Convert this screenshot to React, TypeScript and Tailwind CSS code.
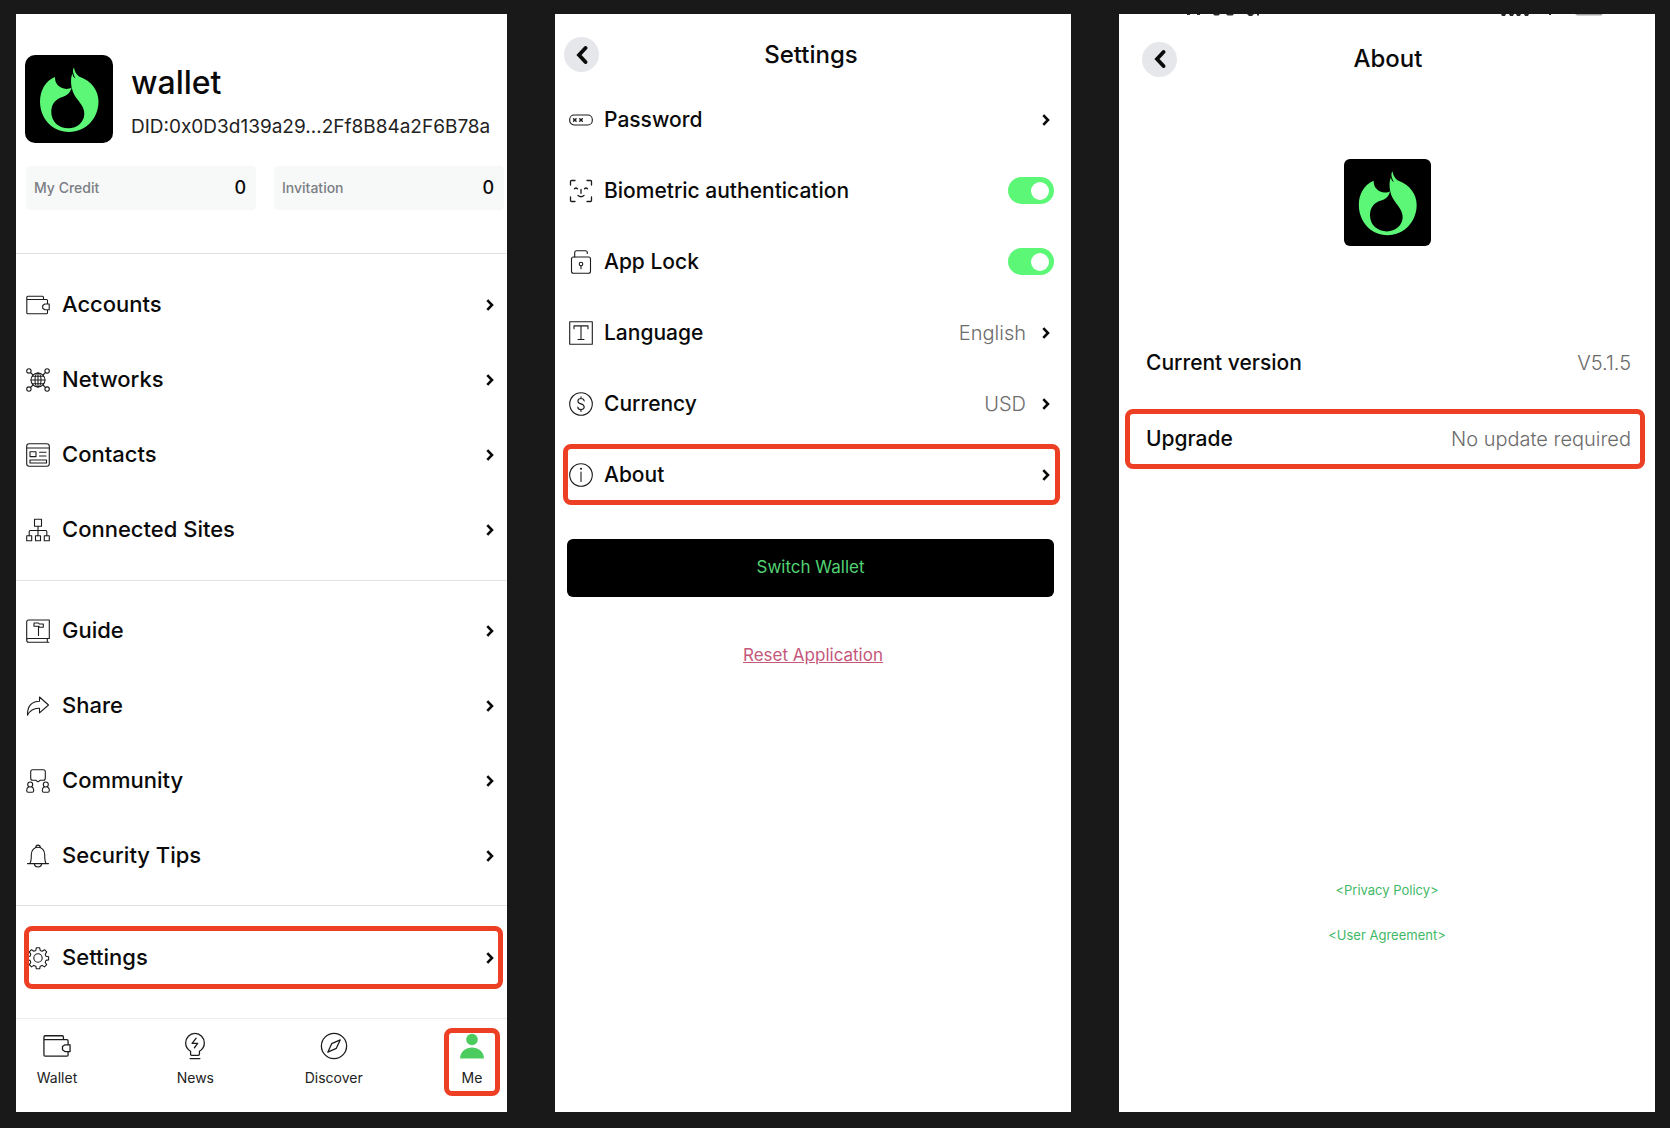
import React from "react";

const GREEN = "#5cf777";

function Flame({ className }: { className: string }) {
  return (
    <svg viewBox="0 0 88 88" className={className} role="img" aria-label="Wallet logo">
      <rect width="88" height="88" fill="#000" />
      <path
        fill={GREEN}
        fillRule="evenodd"
        d="M30 22C20 26 15 36 15 46.500C15 63 27 77 44 77C61 77 73.500 63 73.500 46.500C73.500 36 67 26 54 21.500C51 19 49.500 16 49 12.500C47 15.500 48.200 19 50.500 23.500C48.500 22.500 47.500 20.500 47.600 18.500C45.500 22 45.800 29 47 33.500C48.500 41 53.500 45 56.500 50C58.500 53 59.300 56 59.300 59C59.300 67 52 73.300 43.500 73.300C34 73.300 26.300 67 26.300 57C26.300 48.500 31 44 37.500 42C42.500 40.300 45.500 37.500 46.600 32.500C43.500 34.500 39.500 34.300 36 32.500C31.500 30 30 26.500 30 22Z"
      />
    </svg>
  );
}

type IconProps = { className?: string; children: React.ReactNode };

function Icon({ className = "size-6", children }: IconProps) {
  return (
    <svg
      viewBox="0 0 24 24"
      className={`${className} shrink-0`}
      fill="none"
      stroke="#1c1c1c"
      strokeWidth="1.1"
      strokeLinecap="round"
      strokeLinejoin="round"
      aria-hidden="true"
    >
      {children}
    </svg>
  );
}

const WalletIcon = ({ className }: { className?: string }) => (
  <Icon className={className}>
    <path d="M17.500 6.500V4.200Q17.500 3.200 16.500 3.200H1.800Q.8 3.200.8 4.200V19.700Q.8 20.700 1.800 20.700H20.500Q21.500 20.700 21.500 19.700V16.800M.8 5.500Q.8 6.500 1.800 6.500H20.500Q21.500 6.500 21.500 7.500V11M23.200 11H18.800L16.700 12.500V15.200L18.800 16.800H23.200Z" />
  </Icon>
);

const NetworkIcon = () => (
  <Icon>
    <circle cx="12" cy="12" r="7" />
    <ellipse cx="12" cy="12" rx="3" ry="7" />
    <path d="M5 12h14M12 5v14M6.500 8.200h11M6.500 15.800h11M4.600 4.600 7 7M19.400 4.600 17 7M4.600 19.400 7 17M19.400 19.400 17 17" />
    <circle cx="2.900" cy="2.900" r="2.200" />
    <circle cx="21.100" cy="2.900" r="2.200" />
    <circle cx="2.900" cy="21.100" r="2.200" />
    <circle cx="21.100" cy="21.100" r="2.200" />
  </Icon>
);

const ContactsIcon = () => (
  <Icon>
    <rect x=".7" y=".7" width="22.600" height="22.600" rx="2.500" />
    <path d="M.7 5h22.600M13.500 9.200h6.500M13.500 13h6.500" />
    <rect x="4" y="8.800" width="6" height="4.800" />
    <rect x="4" y="17" width="16.500" height="3" />
  </Icon>
);

const SitesIcon = () => (
  <Icon>
    <rect x="8.500" y="1.200" width="7" height="7" />
    <rect x=".7" y="17.700" width="5" height="5" />
    <rect x="9.500" y="17.700" width="5" height="5" />
    <rect x="18.300" y="17.700" width="5" height="5" />
    <path d="M12 8.200v9.500M3.200 17.700v-4.200q0-1 1-1h15.600q1 0 1 1v4.200" />
  </Icon>
);

const GuideIcon = () => (
  <Icon>
    <path d="M23.300 19.500V1H2.700Q.7 1 .7 3V21.300Q.7 23.300 2.700 23.300H22.800M23.300 19.500H2.500Q.7 19.500.7 21.300M21.300 19.500v3.800" />
    <path d="M8 4h4.500l.8 1h4v3.200h-3.800l-.8-1H8ZM12.500 8v8.500" />
  </Icon>
);

const ShareIcon = () => (
  <Icon>
    <path d="M13.500 3 22.500 11 13.500 18.800V14.300C8 14 4.500 15.500 1.500 21.300C1.200 12 5.500 7.300 13.500 7.200Z" />
  </Icon>
);

const CommunityIcon = () => (
  <Icon>
    <path d="M6.700.8h10.600q2 0 2 2v6.400q0 2-2 2h-3l-2.300 1.700-2.300-1.700h-3q-2 0-2-2V2.800q0-2 2-2Z" />
    <circle cx="4.200" cy="15.500" r="2.500" />
    <circle cx="19.800" cy="15.500" r="2.500" />
    <path d="M2.800 17.700Q.7 18.700.7 21v.8q0 1.500 1.500 1.500h4q1.500 0 1.500-1.500V21q0-2.300-2.100-3.300M18.400 17.700q-2.100 1-2.100 3.300v.8q0 1.500 1.500 1.500h4q1.500 0 1.500-1.500V21q0-2.300-2.100-3.300" />
  </Icon>
);

const BellIcon = () => (
  <Icon>
    <path d="M9.800 3.300a2.200 2.200 0 0 1 4.400 0M1.500 19.600h21M3.800 19.600C5.500 17 5.300 14 5.300 10.500C5.300 6.500 8 3.300 12 3.300S18.700 6.500 18.700 10.500C18.700 14 18.500 17 20.200 19.600M8.300 20.200q.6 2.800 3.700 2.800t3.700-2.800" />
  </Icon>
);

const GearIcon = () => (
  <Icon>
    <circle cx="12" cy="12" r="4.200" />
    <path d="M10.300 1.800h3.400l.5 2.600 2 .8 2.300-1.500 2.200 2.200-1.500 2.300.8 2 2.600.5v3.200l-2.600.5-.8 2 1.500 2.300-2.200 2.200-2.300-1.500-2 .8-.5 2.600h-3.400l-.5-2.600-2-.8-2.300 1.500-2.200-2.200 1.500-2.300-.8-2-2.600-.5v-3.200l2.600-.5.8-2-1.500-2.300 2.200-2.200 2.300 1.500 2-.8Z" />
  </Icon>
);

const PasswordIcon = () => (
  <Icon>
    <rect x=".7" y="7" width="22.600" height="10" rx="4.500" />
    <path strokeWidth="1.400" d="m4.500 10.700 2.600 2.600m0-2.600-2.600 2.600M10.700 10.700l2.600 2.600m0-2.600-2.600 2.600" />
  </Icon>
);

const FaceIcon = () => (
  <Icon>
    <path strokeWidth="1.300" d="M1.500 6V2.500Q1.500 1.500 2.500 1.500H6M18 1.500h3.500q1 0 1 1V6M22.500 18v3.500q0 1-1 1H18M6 22.500H2.500q-1 0-1-1V18M5.500 9.800Q7 8.300 8.500 9.800M15.500 9.800Q17 8.300 18.500 9.800M12 10.500v3.800M9 16.500q3 2.600 6 0" />
  </Icon>
);

const LockIcon = () => (
  <Icon>
    <rect x="2.500" y="7" width="19" height="16.300" rx="2" />
    <circle cx="12" cy="14" r="1.800" />
    <path d="M12 15.800v3M5.700 7V2.700q0-2 2-2h8.600q2 0 2 2v.8" />
  </Icon>
);

const LanguageIcon = () => (
  <Icon>
    <rect x=".7" y=".7" width="22.600" height="22.600" />
    <path d="M5 7.800V4.900h14v2.900M12 4.900v13.600M9 18.500h6" />
  </Icon>
);

const CurrencyIcon = () => (
  <Icon>
    <circle cx="12" cy="12" r="11.300" />
    <path d="M15.200 9q-.3-2.500-3.200-2.500T8.900 8.900q0 2.200 3.100 3t3.200 3.200q0 2.500-3.200 2.500T8.800 15M12 4.800v1.700M12 17.600v1.800" />
  </Icon>
);

const InfoIcon = () => (
  <Icon>
    <circle cx="12" cy="12" r="11.300" />
    <path d="M12 9v9.500" />
    <circle cx="12" cy="5.800" r=".5" fill="#1c1c1c" />
  </Icon>
);

const BulbIcon = () => (
  <Icon className="size-7">
    <path d="M8.200 18.800V16.500C5.500 15 4 12.500 4 9.500C4 5 7.500 1.200 12 1.200S20 5 20 9.500C20 12.500 18.500 15 15.800 16.500V18.800Q15.800 20 14.800 20H9.200Q8.200 20 8.200 18.800ZM7.800 22.800h8.400M13 5.300 9.500 9.800H14.300L11.500 13.500" />
  </Icon>
);

const CompassIcon = () => (
  <Icon className="size-7">
    <circle cx="12" cy="12" r="10.800" />
    <path d="M17.300 6.800 14 14 6.700 17.300 10 10Z" />
  </Icon>
);

const PersonIcon = () => (
  <svg viewBox="0 0 28 28" className="size-7 shrink-0" fill="#4ccb5f" aria-hidden="true">
    <circle cx="14" cy="7.500" r="5.800" />
    <path d="M2 26.500C2.500 19 8 15.500 14 15.500S25.500 19 26 26.500Z" />
  </svg>
);

function Chevron() {
  return (
    <svg viewBox="0 0 8 12" className="h-3 w-2 shrink-0" fill="none" stroke="#0a0a0a" strokeWidth="2.600" aria-hidden="true">
      <path d="M1.300 1.200 6 6 1.300 10.800" />
    </svg>
  );
}

function Highlight({ className }: { className: string }) {
  return <span aria-hidden="true" className={`pointer-events-none absolute rounded-lg border-5 border-[#ed3f24] ${className}`} />;
}

function MenuRow({ icon, label, children }: { icon: React.ReactNode; label: string; children?: React.ReactNode }) {
  return (
    <li className="relative">
      <button type="button" className="flex h-[75px] w-full items-center pr-[13px] pl-2.5 text-left">
        {icon}
        <span className="ml-3 flex-1 text-[22px] font-medium">{label}</span>
        <Chevron />
      </button>
      {children}
    </li>
  );
}

function Stat({ label, value }: { label: string; value: string }) {
  return (
    <div className="flex h-11 flex-1 items-center justify-between rounded-sm bg-[#f7f8f8] pr-2.5 pl-2">
      <dt className="text-sm font-medium text-[#7b7e84]">{label}</dt>
      <dd className="text-lg font-medium">{value}</dd>
    </div>
  );
}

function Tab({ icon, label, children }: { icon: React.ReactNode; label: string; children?: React.ReactNode }) {
  return (
    <button type="button" className="relative flex w-14 flex-col items-center gap-2 text-sm text-[#222]">
      {icon}
      <span>{label}</span>
      {children}
    </button>
  );
}

function MeScreen() {
  return (
    <section className="flex min-w-0 flex-col bg-white">
      <header className="flex items-center gap-[18px] px-[9px] pt-[41px]">
        <Flame className="size-[88px] shrink-0 rounded-[10px]" />
        <div className="min-w-0 pt-[7px]">
          <h1 className="text-[32px] leading-10 font-medium">wallet</h1>
          <p className="mt-2 text-[19px] leading-8 whitespace-nowrap text-[#222]">DID:0x0D3d139a29…2Ff8B84a2F6B78a</p>
        </div>
      </header>
      <dl className="mt-[23px] mb-[43px] flex gap-[18px] pr-[3px] pl-2.5">
        <Stat label="My Credit" value="0" />
        <Stat label="Invitation" value="0" />
      </dl>
      <ul className="border-t border-[#e2e2e2] py-[13px]">
        <MenuRow icon={<WalletIcon />} label="Accounts" />
        <MenuRow icon={<NetworkIcon />} label="Networks" />
        <MenuRow icon={<ContactsIcon />} label="Contacts" />
        <MenuRow icon={<SitesIcon />} label="Connected Sites" />
      </ul>
      <ul className="border-t border-[#e2e2e2] py-3">
        <MenuRow icon={<GuideIcon />} label="Guide" />
        <MenuRow icon={<ShareIcon />} label="Share" />
        <MenuRow icon={<CommunityIcon />} label="Community" />
        <MenuRow icon={<BellIcon />} label="Security Tips" />
      </ul>
      <ul className="border-t border-[#e2e2e2] pt-3.5 pb-[23px]">
        <MenuRow icon={<GearIcon />} label="Settings">
          <Highlight className="inset-y-1.5 right-1 left-2" />
        </MenuRow>
      </ul>
      <nav className="flex flex-1 items-start justify-between border-t border-[#ececec] pt-[13px] pr-[7px] pl-[13px]">
        <Tab icon={<WalletIcon className="size-7" />} label="Wallet" />
        <Tab icon={<BulbIcon />} label="News" />
        <Tab icon={<CompassIcon />} label="Discover" />
        <Tab icon={<PersonIcon />} label="Me">
          <Highlight className="inset-x-0 -top-1 -bottom-2" />
        </Tab>
      </nav>
    </section>
  );
}

function TitleBar({ title, className }: { title: string; className: string }) {
  return (
    <header className={`grid grid-cols-[35px_1fr_35px] items-center ${className}`}>
      <button type="button" aria-label="Back" className="grid size-[35px] place-items-center rounded-full bg-[#e6e7ea]">
        <svg viewBox="0 0 12 18" className="h-[18px] w-3" fill="none" stroke="#0a0a0a" strokeWidth="3.800" strokeLinecap="round" aria-hidden="true">
          <path d="M9.500 2 3 9l6.500 7" />
        </svg>
      </button>
      <h2 className="text-center text-2xl font-medium">{title}</h2>
    </header>
  );
}

const settingRow = "flex h-[71px] w-full items-center pl-3.5 text-left";
const settingLabel = "ml-[11px] flex-1 text-[21px] font-medium";

function SettingLink({ icon, label, value, children }: { icon: React.ReactNode; label: string; value?: string; children?: React.ReactNode }) {
  return (
    <li className="relative">
      <button type="button" className={`${settingRow} pr-[21px]`}>
        {icon}
        <span className={settingLabel}>{label}</span>
        {value && <span className="mr-4 text-xl font-light text-[#6b6b6b]">{value}</span>}
        <Chevron />
      </button>
      {children}
    </li>
  );
}

function SettingSwitch({ icon, label }: { icon: React.ReactNode; label: string }) {
  return (
    <li>
      <label className={`${settingRow} relative pr-[17px]`}>
        {icon}
        <span className={settingLabel}>{label}</span>
        <input type="checkbox" role="switch" defaultChecked className="peer sr-only" />
        <span className="flex h-[27px] w-[46px] items-center rounded-full bg-[#d4d4d4] px-[5px] peer-checked:justify-end peer-checked:bg-[#5cf777]">
          <span className="size-[18px] rounded-full bg-white" />
        </span>
      </label>
    </li>
  );
}

function SettingsScreen() {
  return (
    <section className="flex min-w-0 flex-col bg-white">
      <TitleBar title="Settings" className="h-[70px] pt-[11px] pr-[13px] pl-[9px]" />
      <ul>
        <SettingLink icon={<PasswordIcon />} label="Password" />
        <SettingSwitch icon={<FaceIcon />} label="Biometric authentication" />
        <SettingSwitch icon={<LockIcon />} label="App Lock" />
        <SettingLink icon={<LanguageIcon />} label="Language" value="English" />
        <SettingLink icon={<CurrencyIcon />} label="Currency" value="USD" />
        <SettingLink icon={<InfoIcon />} label="About">
          <Highlight className="inset-y-[5px] right-[11px] left-2" />
        </SettingLink>
      </ul>
      <button type="button" className="mt-[29px] mr-[17px] ml-3 h-[58px] rounded-md bg-black text-[17px] text-[#52d273]">
        Switch Wallet
      </button>
      <a href="#reset" className="mt-11 self-center text-[17px] leading-7 text-[#c4587a] underline">
        Reset Application
      </a>
    </section>
  );
}

/** Lower edge of the device status bar, cut off by the top of the screen. */
function StatusBarEdge() {
  return (
    <div aria-hidden="true" className="absolute inset-x-0 top-0 flex justify-between pr-[52px] pl-[67px]">
      <svg viewBox="0 0 74 2" className="h-0.5 w-[74px]" fill="#2a2a2a">
        <path d="M1 0h3v1h-3ZM11 0h3v1h-3ZM27 0h7l-1.500 1.500h-4ZM40 0h8l-1.500 1.500h-5ZM61 0h7l-2 2h-3ZM71 0h2v1.500h-2Z" />
      </svg>
      <svg viewBox="0 0 102 2" className="h-0.5 w-[102px]" fill="#2a2a2a">
        <path d="M0 0h5l-1 2h-3ZM8 0h5l-1 2h-3ZM15 0h5l-1 2h-3ZM23 0h5l-1 2h-3ZM48 0h2v1h-2Z" />
        <path fill="#a3a3a3" d="M74 0h28l-2 1.500h-24Z" />
      </svg>
    </div>
  );
}

function AboutScreen() {
  return (
    <section className="relative flex min-w-0 flex-col bg-white">
      <StatusBarEdge />
      <TitleBar title="About" className="h-[63px] pt-[27px] pr-[21px] pl-[23px]" />
      <Flame className="mt-[82px] size-[87px] self-center rounded-md" />
      <dl className="mt-[79px]">
        <div className="flex h-[76px] items-center justify-between pr-6 pl-[27px]">
          <dt className="text-[21px] font-medium">Current version</dt>
          <dd className="text-xl font-light text-[#6b6b6b]">V5.1.5</dd>
        </div>
        <div className="relative flex h-[76px] items-center justify-between pr-6 pl-[27px]">
          <dt className="text-[21px] font-medium">Upgrade</dt>
          <dd className="text-xl font-light text-[#6b6b6b]">No update required</dd>
          <Highlight className="inset-y-2 right-2.5 left-1.5" />
        </div>
      </dl>
      <nav className="mt-[391px] flex flex-col items-center text-[13px] text-[#3fb866]">
        <a href="#privacy" className="flex h-[45px] items-center">&lt;Privacy Policy&gt;</a>
        <a href="#agreement" className="flex h-[45px] items-center">&lt;User Agreement&gt;</a>
      </nav>
    </section>
  );
}

export default function App() {
  return (
    <main className="grid min-h-screen grid-cols-[491fr_516fr_536fr] gap-12 bg-[#191919] pt-3.5 pr-[15px] pb-4 pl-4 font-[Inter,sans-serif] text-[#0a0a0a]">
      <MeScreen />
      <SettingsScreen />
      <AboutScreen />
    </main>
  );
}
